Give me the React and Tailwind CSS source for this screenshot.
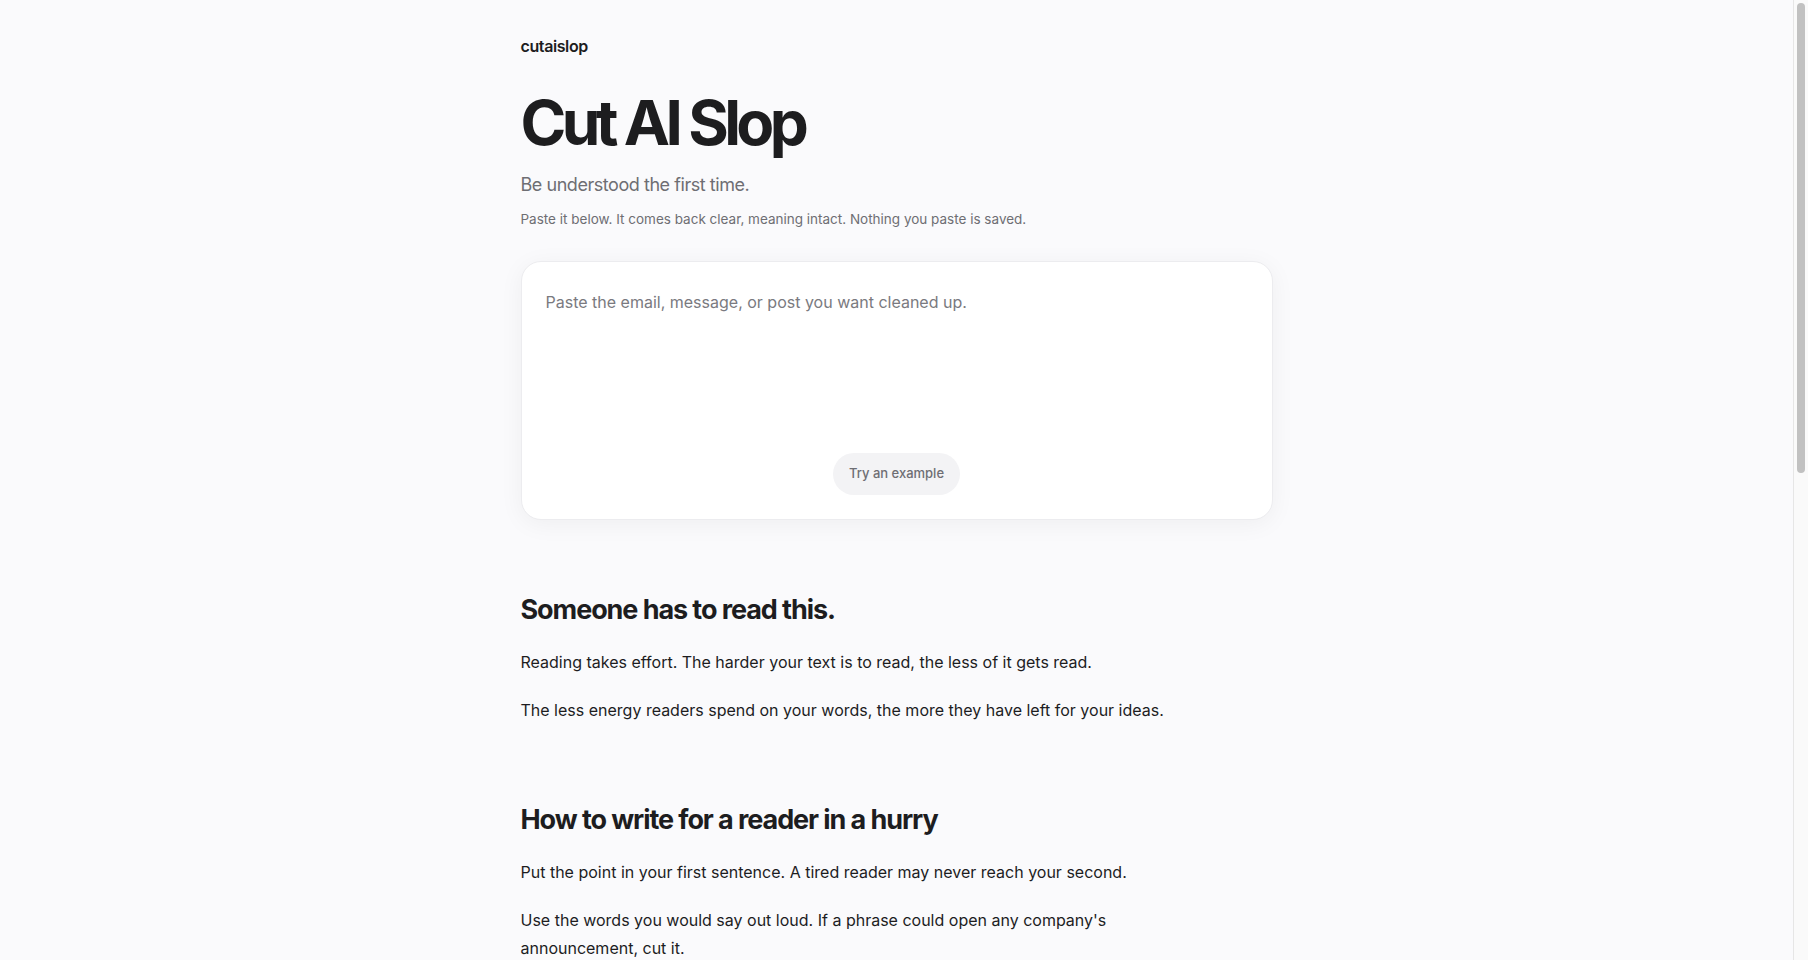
import React, { useState } from "react";

const sections = [
  {
    head: "Someone has to read this.",
    paras: [
      "Reading takes effort. The harder your text is to read, the less of it gets read.",
      "The less energy readers spend on your words, the more they have left for your ideas.",
    ],
  },
  {
    head: "How to write for a reader in a hurry",
    paras: [
      "Put the point in your first sentence. A tired reader may never reach your second.",
      "Use the words you would say out loud. If a phrase could open any company's announcement, cut it.",
      "Keep sentences short. One idea each is plenty.",
      "Delete the warm-up. Nobody misses the paragraph that explains what the next paragraph will say.",
    ],
  },
];

const App = () => {
  const [text, setText] = useState("");

  return (
    <div className="min-h-screen bg-[#fafafc] pr-[15px] text-[#1d1d1f] font-['Inter','Liberation_Sans',sans-serif]">
      <div className="mx-auto max-w-[752px] pt-[36px] pb-32">
        <div className="text-base font-semibold leading-5 tracking-tight">cutaislop</div>

        <h1 className="mt-[31px] text-[62px] font-bold leading-[72px] tracking-[-0.075em]">Cut AI Slop</h1>
        <p className="mt-[12px] text-[18px] leading-7 text-[#6e6e73] tracking-tight">Be understood the first time.</p>
        <p className="mt-[10px] text-[13.5px] leading-5 text-[#6e6e73]">
          Paste it below. It comes back clear, meaning intact. Nothing you paste is saved.
        </p>

        <div className="mt-[32px] flex h-[259px] flex-col rounded-[20px] border border-[#ececef] bg-white px-6 pt-[26px] pb-6 shadow-[0_4px_24px_rgba(0,0,0,0.05)]">
          <textarea
            value={text}
            onChange={(e) => setText(e.target.value)}
            placeholder="Paste the email, message, or post you want cleaned up."
            className="flex-1 resize-none bg-transparent text-base leading-7 outline-none placeholder:text-[#7a7a80]"
          />
          <div className="flex justify-center">
            <button className="h-[42px] rounded-full bg-[#f3f3f5] px-4 text-[13px] font-medium text-[#6e6e73]">
              Try an example
            </button>
          </div>
        </div>

        {sections.map((s, i) => (
          <section key={s.head} className={i === 0 ? "mt-[72px] max-w-[660px]" : "mt-[78px] max-w-[660px]"}>
            <h2 className="text-[27px] font-bold leading-9 tracking-[-0.04em]">{s.head}</h2>
            <div className="mt-5 flex flex-col gap-5">
              {s.paras.map((p) => (
                <p key={p} className="text-base leading-7">{p}</p>
              ))}
            </div>
          </section>
        ))}
      </div>

      {/* fake scrollbar like the browser one */}
      <div className="fixed top-0 right-0 h-screen w-[15px] border-l border-[#e6e6e6] bg-[#fafafa]">
        <div className="mx-auto mt-[3px] h-[470px] w-[8px] rounded-full bg-[#c1c1c1]" />
      </div>
    </div>
  );
};

export default App;
